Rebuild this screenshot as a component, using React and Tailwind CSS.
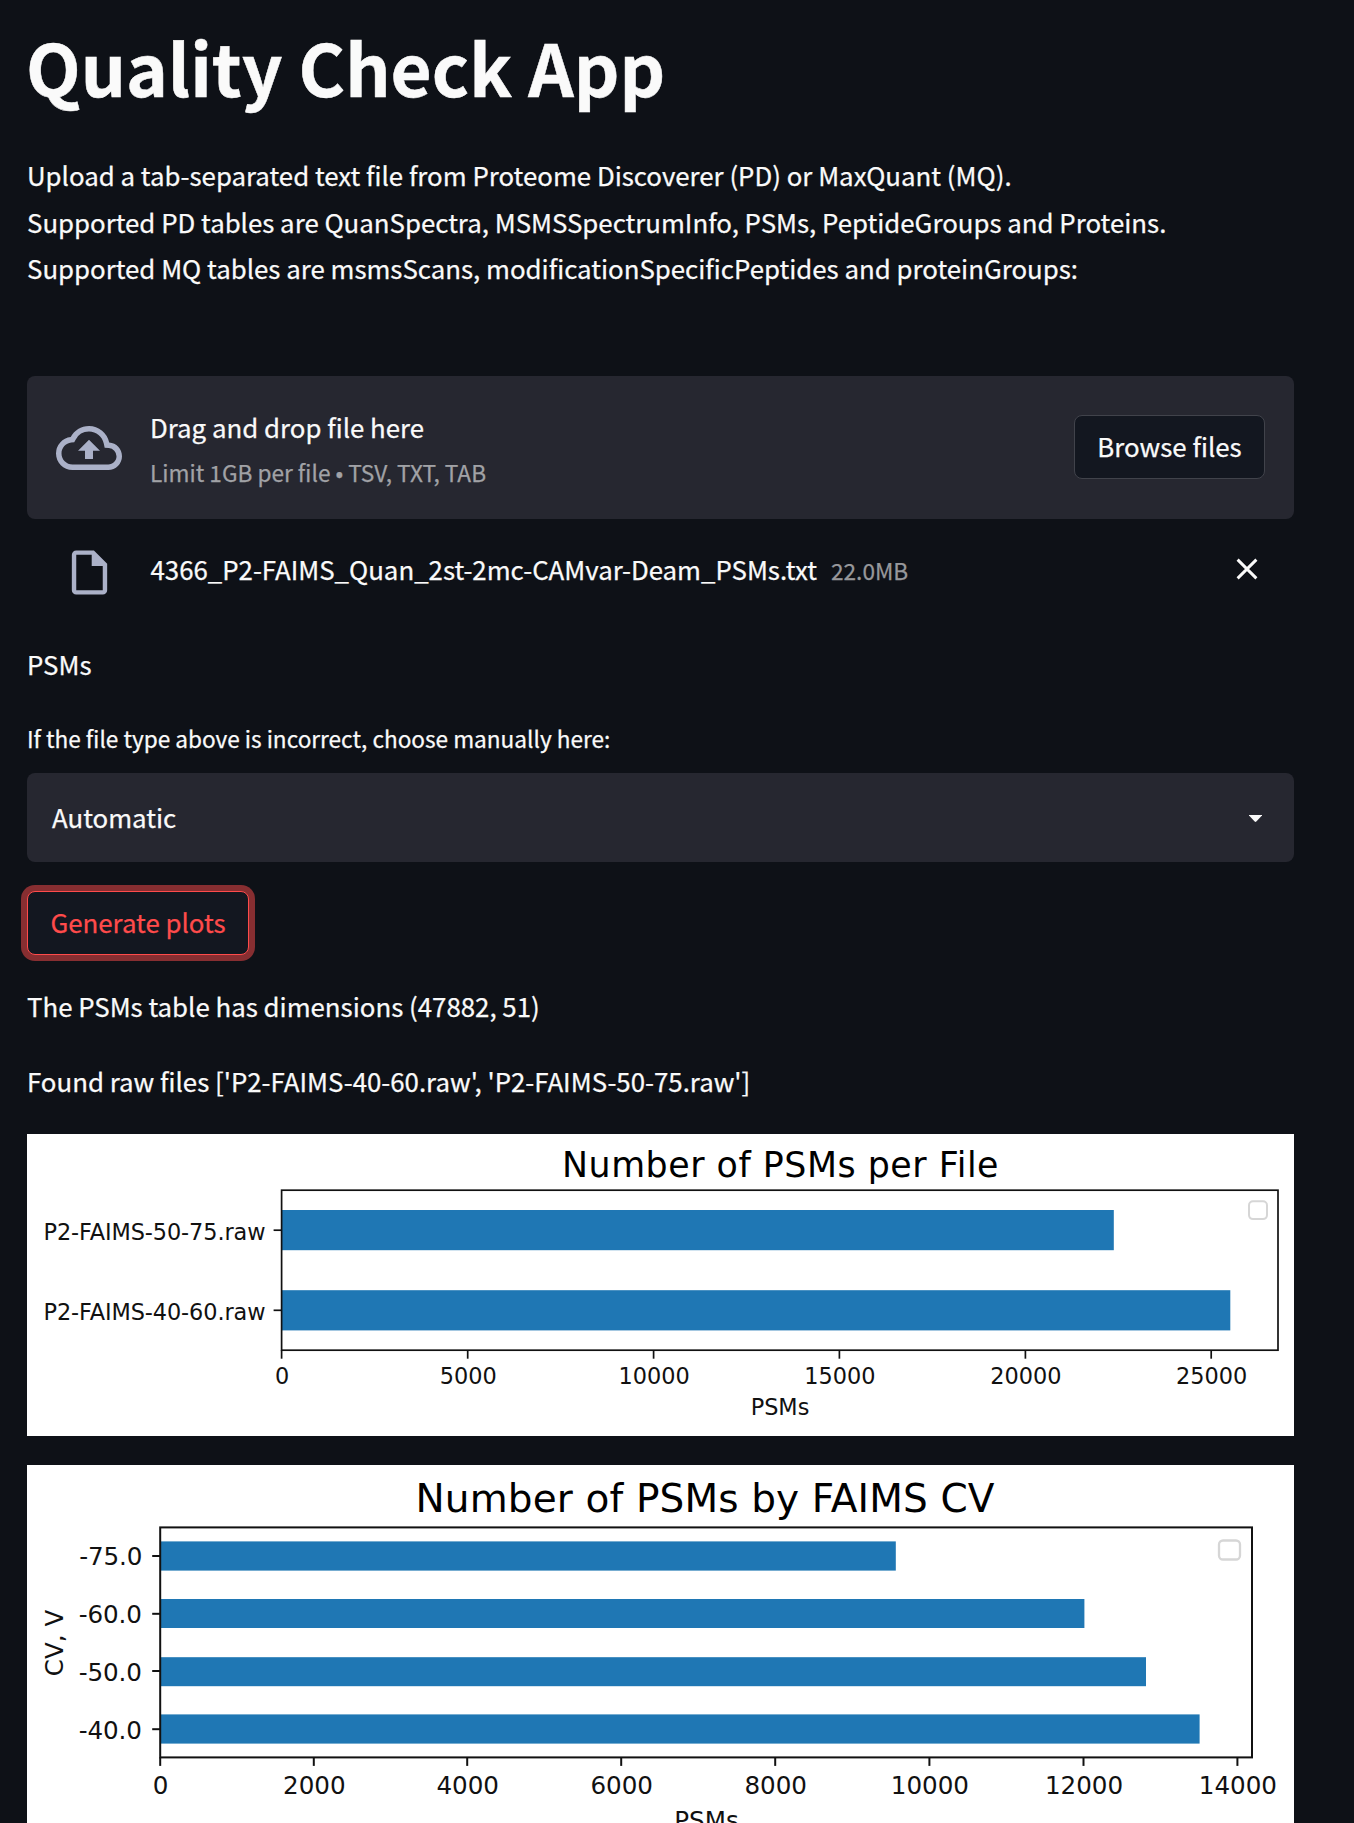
import React from "react";

const intro = [
  "Upload a tab-separated text file from Proteome Discoverer (PD) or MaxQuant (MQ).",
  "Supported PD tables are QuanSpectra, MSMSSpectrumInfo, PSMs, PeptideGroups and Proteins.",
  "Supported MQ tables are msmsScans, modificationSpecificPeptides and proteinGroups:",
];

function CloudUploadIcon() {
  return (
    <svg className="h-[66px] w-[66px] shrink-0 fill-[#abb1c8]" viewBox="0 0 24 24">
      <path d="M19.35 10.04A7.49 7.49 0 0 0 12 4C9.11 4 6.6 5.64 5.35 8.04A5.994 5.994 0 0 0 0 14c0 3.31 2.69 6 6 6h13c2.76 0 5-2.24 5-5 0-2.64-2.05-4.78-4.65-4.96zM19 18H6c-2.21 0-4-1.79-4-4 0-2.05 1.53-3.76 3.56-3.97l1.07-.11.5-.95A5.469 5.469 0 0 1 12 6c2.62 0 4.88 1.86 5.39 4.43l.3 1.5 1.53.11A2.98 2.98 0 0 1 22 15c0 1.65-1.35 3-3 3zM8 13h2.55v3h2.9v-3H16l-4-4-4 4z" />
    </svg>
  );
}

function FileIcon() {
  return (
    <svg className="mt-2 h-[53px] w-[53px] shrink-0 fill-[#abb1c8]" viewBox="0 0 24 24">
      <path d="M14 2H6c-1.1 0-1.99.9-1.99 2L4 20c0 1.1.89 2 1.99 2H18c1.1 0 2-.9 2-2V8l-6-6zM6 20V4h7v5h5v11H6z" />
    </svg>
  );
}

function CloseIcon() {
  return (
    <svg className="h-9 w-9" viewBox="0 0 36 36" fill="none" stroke="#fafafa" strokeWidth="2.9">
      <path d="M8.6 8.6 27.4 27.4M27.4 8.6 8.6 27.4" />
    </svg>
  );
}

/* Draws a horizontal bar chart; geometry is given in the chart's own pixels. */
function BarChart({ height, title, frame, bars, xTicks, xTickLabelY, legend, fontSize, xLabel, yLabel, line }) {
  const { x, y, right, bottom } = frame;
  return (
    <svg
      className="block w-[1267px] bg-white"
      height={height}
      viewBox={`0 0 1267 ${height}`}
      fontFamily='"DejaVu Sans", sans-serif'
      fontSize={fontSize}
      fill="#111"
    >
      <text x={title.x} y={title.y} fontSize={title.size} textLength={title.width} fill="#000">
        {title.text}
      </text>
      {bars.map((b) => (
        <g key={b.label}>
          <rect x={x} y={b.top} width={b.end - x} height={b.height} fill="#1f77b4" />
          <path d={`M${x} ${b.tick}h-8`} stroke="#111" strokeWidth={line} />
          <text x={b.labelX} y={b.labelY} textLength={b.labelWidth}>
            {b.label}
          </text>
        </g>
      ))}
      <rect x={x} y={y} width={right - x} height={bottom - y} fill="none" stroke="#111" strokeWidth={line} />
      {xTicks.map(([value, tx]) => (
        <g key={value}>
          <path d={`M${tx} ${bottom}v8.5`} stroke="#111" strokeWidth={line} />
          <text x={tx + 0.5} y={xTickLabelY} textAnchor="middle">
            {value}
          </text>
        </g>
      ))}
      <text x={xLabel.x} y={xLabel.y} textAnchor="middle">
        PSMs
      </text>
      {yLabel && (
        <text transform={`translate(${yLabel.x} ${yLabel.y}) rotate(-90)`} textAnchor="middle">
          {yLabel.text}
        </text>
      )}
      <rect
        x={legend.x}
        y={legend.y}
        width={legend.w}
        height={legend.h}
        rx="4"
        fill="#fff"
        stroke="#d6d6d6"
        strokeWidth={line + 0.3}
      />
    </svg>
  );
}

const perFile = {
  height: 302,
  line: 1.7,
  fontSize: 22.4,
  title: { text: "Number of PSMs per File", x: 535, y: 43, size: 34.8, width: 436.5 },
  frame: { x: 254.6, y: 56.2, right: 1251, bottom: 216.2 },
  bars: [
    { label: "P2-FAIMS-50-75.raw", top: 76, height: 40.2, end: 1086.8, tick: 96.2, labelX: 16.5, labelY: 105.6, labelWidth: 222 },
    { label: "P2-FAIMS-40-60.raw", top: 156.2, height: 40.2, end: 1203.3, tick: 176.3, labelX: 16.5, labelY: 185.6, labelWidth: 222 },
  ],
  xTicks: [["0", 254.6], ["5000", 440.7], ["10000", 626.6], ["15000", 812.4], ["20000", 998.4], ["25000", 1184.2]],
  xTickLabelY: 249.6,
  xLabel: { x: 753, y: 281 },
  legend: { x: 1222, y: 67.3, w: 18, h: 17.8 },
};

const byVoltage = {
  height: 410,
  line: 2,
  fontSize: 24.6,
  title: { text: "Number of PSMs by FAIMS CV", x: 388.5, y: 47.3, size: 39, width: 579 },
  frame: { x: 133.2, y: 62.4, right: 1225, bottom: 292.4 },
  bars: [
    { label: "-75.0", top: 76.4, height: 29.2, end: 868.8, tick: 91, labelX: 52.3, labelY: 100.4, labelWidth: 63 },
    { label: "-60.0", top: 134, height: 29, end: 1057.4, tick: 148.8, labelX: 51.8, labelY: 158.2, labelWidth: 63 },
    { label: "-50.0", top: 192.2, height: 29, end: 1119, tick: 206, labelX: 51.8, labelY: 215.7, labelWidth: 63 },
    { label: "-40.0", top: 249.4, height: 29.2, end: 1172.6, tick: 264.2, labelX: 51.8, labelY: 273.6, labelWidth: 63 },
  ],
  xTicks: [["0", 133.2], ["2000", 286.8], ["4000", 440.2], ["6000", 594.2], ["8000", 748.2], ["10000", 902.4], ["12000", 1056.5], ["14000", 1210.4]],
  xTickLabelY: 329.4,
  xLabel: { x: 679.5, y: 363.7 },
  yLabel: { text: "CV, V", x: 36, y: 178 },
  legend: { x: 1192, y: 75.5, w: 21, h: 19 },
};

export default function App() {
  return (
    <main className='h-[1823px] w-full overflow-hidden bg-[#0e1117] pl-[27px] font-["Noto_Sans_CJK_JP",sans-serif] text-[25.82px] leading-[46px] text-[#fafafa] [-webkit-text-stroke:0.25px]'>
      <div className="flex w-[1267px] flex-col">
        <h1 className="-ml-px mt-[26px] whitespace-nowrap text-[71px] font-bold leading-[80px] [-webkit-text-stroke:0.5px]">
          Quality Check App
        </h1>

        <div className="mt-[46px] whitespace-nowrap leading-[46.5px]">
          {intro.map((t) => (
            <p key={t}>{t}</p>
          ))}
        </div>

        <section className="mt-[84.5px] flex h-[143px] items-center rounded-lg bg-[#262730] px-[29px]">
          <CloudUploadIcon />
          <div className="ml-[28px] flex-1 pt-[3px]">
            <div>Drag and drop file here</div>
            <div className="text-[22.65px] leading-[45px] text-[#a1a2a6]">Limit 1GB per file • TSV, TXT, TAB</div>
          </div>
          <button className="mb-px flex h-16 w-[191px] items-center justify-center rounded-lg border border-[#41434b] bg-[#131720] pb-0.5">
            Browse files
          </button>
        </section>

        <div className="flex h-[99px] items-center pl-[36px] pr-[29px]">
          <FileIcon />
          <div className="ml-[34.5px] flex flex-1 items-baseline gap-3.5 pt-0.5">
            <span>4366_P2-FAIMS_Quan_2st-2mc-CAMvar-Deam_PSMs.txt</span>
            <span className="text-[22.65px] text-[#97989b]">22.0MB</span>
          </div>
          <CloseIcon />
        </div>

        <p className="mt-[23px]">PSMs</p>

        <label className="mt-8 text-[22.6px] leading-10">If the file type above is incorrect, choose manually here:</label>
        <div className="mt-[14px] flex h-[89px] items-center justify-between rounded-lg bg-[#262730] pl-[25px] pr-[32.5px]">
          <span className="pb-px">Automatic</span>
          <svg className="mt-px h-[7px] w-[13px] fill-[#fafafa]" viewBox="0 0 13 7">
            <path d="M0 0h13v.6L7.3 6.5q-.8.8-1.6 0L0 .6z" />
          </svg>
        </div>

        <button className="mt-[29px] flex h-16 w-[222px] items-center justify-center rounded-lg border border-[#ff4b4b] bg-[#131720] pb-[3px] text-[#ff4b4b] shadow-[0_0_0_6px_rgba(255,75,75,0.5)]">
          Generate plots
        </button>

        <p className="mt-[28px]">The PSMs table has dimensions (47882, 51)</p>
        <p className="mt-[29px]">Found raw files ['P2-FAIMS-40-60.raw', 'P2-FAIMS-50-75.raw']</p>

        <div className="mt-[30px] flex flex-col gap-[29px] [-webkit-text-stroke:0]">
          <BarChart {...perFile} />
          <BarChart {...byVoltage} />
        </div>
      </div>
    </main>
  );
}
